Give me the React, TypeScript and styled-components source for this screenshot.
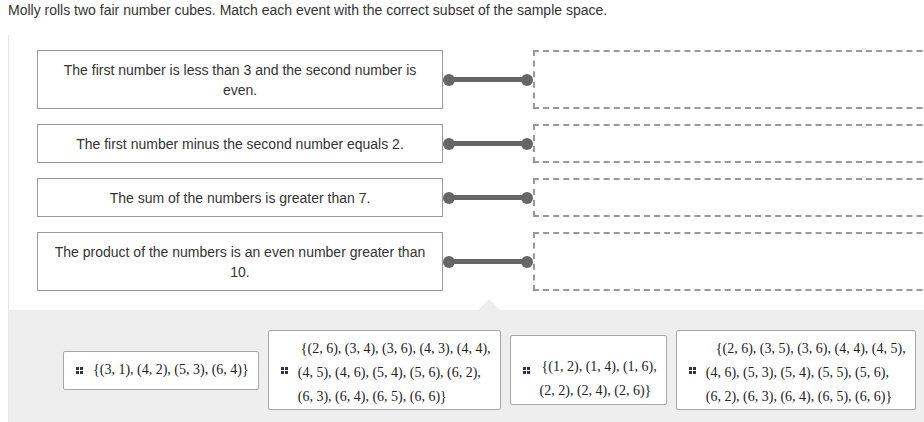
import React from "react";
import styled, { createGlobalStyle } from "styled-components";

const Global = createGlobalStyle`
  html, body { margin: 0; padding: 0; background: #fff; overflow: hidden; }
  body { font-family: "Liberation Sans", Arial, sans-serif; color: #333; }
`;

const Page = styled.div`
  padding: 0 0 0 8px;
  width: 1100px;
`;

const Title = styled.div`
  font-size: 14px;
  line-height: 20px;
  color: #333;
`;

const Question = styled.div`
  margin-top: 15px;
  border-left: 1px solid #e6e6e6;
`;

const MatchArea = styled.div`
  display: grid;
  grid-template-columns: 406px 90px 440px;
  row-gap: 15px;
  padding: 15px 0 19px 28px;
`;

const EventBox = styled.div`
  border: 1px solid #9a9a9a;
  padding: 9px 15px 8px;
  font-size: 14px;
  line-height: 20px;
  text-align: center;
  color: #333;
`;

const Connector = styled.div`
  display: flex;
  align-items: center;
`;

const Dot = styled.span`
  width: 12px;
  height: 12px;
  border-radius: 50%;
  background: #666;
  flex: none;
`;

const Bar = styled.span`
  flex: 1;
  height: 5px;
  background: #666;
  margin: 0 -3px;
`;

const DropZone = styled.div`
  border: 2px dashed #999;
`;

const Tray = styled.div`
  position: relative;
  background: #eeeeee;
  display: flex;
  align-items: flex-start;
  padding: 20px 0 20px 54px;
  min-height: 120px;
  box-sizing: border-box;
`;

const Pointer = styled.span`
  position: absolute;
  top: -11px;
  left: 469px;
  width: 0;
  height: 0;
  border-left: 11px solid transparent;
  border-right: 11px solid transparent;
  border-bottom: 11px solid #eeeeee;
`;

const Cards = styled.div`
  display: flex;
  align-items: center;
  gap: 9px;
`;

const Card = styled.div`
  display: flex;
  align-items: center;
  gap: 10px;
  background: #fff;
  border: 1px solid #a8a8a8;
  border-radius: 2px;
  padding: 0 9px 0 12px;
`;

const Handle = styled.span`
  display: grid;
  grid-template-columns: 3px 3px;
  grid-template-rows: 3px 3px;
  gap: 1px;
  flex: none;
  span {
    background: #2f3440;
  }
`;

const SetText = styled.div<{ $pt: number; $pb: number }>`
  font-family: "Liberation Serif", "Times New Roman", serif;
  font-size: 14px;
  line-height: 24px;
  color: #222;
  white-space: nowrap;
  padding: ${(p) => p.$pt}px 0 ${(p) => p.$pb}px;
`;

const Line = styled.div<{ $indent: number }>`
  padding-left: ${(p) => p.$indent}px;
`;

const events = [
  "The first number is less than 3 and the second number is even.",
  "The first number minus the second number equals 2.",
  "The sum of the numbers is greater than 7.",
  "The product of the numbers is an even number greater than 10.",
];

const choices: { lines: string[]; pt: number; pb: number; indent: number }[] = [
  { lines: ["{(3, 1), (4, 2), (5, 3), (6, 4)}"], pt: 6, pb: 7, indent: 0 },
  {
    lines: [
      "{(2, 6), (3, 4), (3, 6), (4, 3), (4, 4),",
      "(4, 5), (4, 6), (5, 4), (5, 6), (6, 2),",
      "(6, 3), (6, 4), (6, 5), (6, 6)}",
    ],
    pt: 6,
    pb: 0,
    indent: 3,
  },
  {
    lines: ["{(1, 2), (1, 4), (1, 6),", "(2, 2), (2, 4), (2, 6)}"],
    pt: 19,
    pb: 1,
    indent: 2,
  },
  {
    lines: [
      "{(2, 6), (3, 5), (3, 6), (4, 4), (4, 5),",
      "(4, 6), (5, 3), (5, 4), (5, 5), (5, 6),",
      "(6, 2), (6, 3), (6, 4), (6, 5), (6, 6)}",
    ],
    pt: 6,
    pb: 0,
    indent: 10,
  },
];

export default function App() {
  return (
    <Page>
      <Global />
      <Title>
        Molly rolls two fair number cubes. Match each event with the correct
        subset of the sample space.
      </Title>
      <Question>
        <MatchArea>
          {events.map((e, i) => (
            <React.Fragment key={i}>
              <EventBox>{e}</EventBox>
              <Connector>
                <Dot />
                <Bar />
                <Dot />
              </Connector>
              <DropZone />
            </React.Fragment>
          ))}
        </MatchArea>
        <Tray>
          <Pointer />
          <Cards>
            {choices.map((c, i) => (
              <Card key={i}>
                <Handle>
                  <span />
                  <span />
                  <span />
                  <span />
                </Handle>
                <SetText $pt={c.pt} $pb={c.pb}>
                  {c.lines.map((l, j) => (
                    <Line key={j} $indent={j === 0 ? c.indent : 0}>
                      {l}
                    </Line>
                  ))}
                </SetText>
              </Card>
            ))}
          </Cards>
        </Tray>
      </Question>
    </Page>
  );
}
